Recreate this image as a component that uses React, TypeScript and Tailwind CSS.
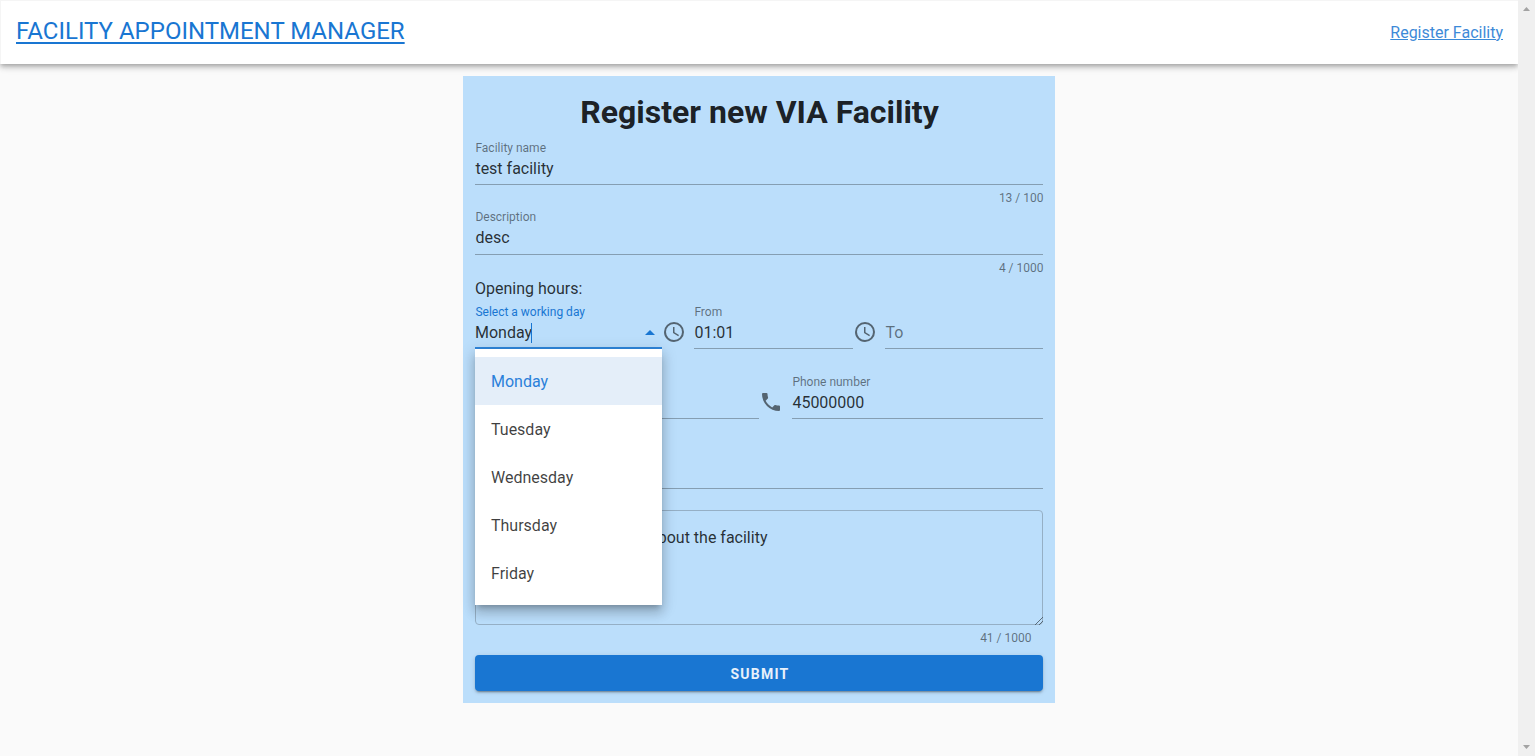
import type { ReactNode } from "react";

const days = ["Monday", "Tuesday", "Wednesday", "Thursday", "Friday"];

function Field({
  label,
  value,
  className = "",
  line = "border-[#859eb2]",
}: {
  label?: string;
  value?: ReactNode;
  className?: string;
  line?: string;
}) {
  return (
    <div className={`flex flex-col border-b ${line} ${className}`}>
      <div className="h-5 pl-[0.4px] text-xs leading-5 text-black/50 whitespace-nowrap">{label}</div>
      <div className="flex h-[21px] items-center justify-between pl-[0.4px] text-base leading-[21px] text-black/80">
        {value}
      </div>
    </div>
  );
}

function Counter({ children, className = "" }: { children: ReactNode; className?: string }) {
  return (
    <div className={`h-5 text-right text-xs leading-5 text-black/50 ${className}`}>
      <span className="-mr-[0.5px]">{children}</span>
    </div>
  );
}

function ClockIcon({ className = "" }: { className?: string }) {
  return (
    <svg viewBox="0 0 24 24" className={`size-6 shrink-0 ${className}`} fill="#546471">
      <path d="M12,20A8,8 0 0,0 20,12A8,8 0 0,0 12,4A8,8 0 0,0 4,12A8,8 0 0,0 12,20M12,2A10,10 0 0,1 22,12A10,10 0 0,1 12,22C6.47,22 2,17.5 2,12A10,10 0 0,1 12,2M12.5,7V12.25L17,14.92L16.25,16.15L11,13V7H12.5Z" />
    </svg>
  );
}

function PhoneIcon({ className = "" }: { className?: string }) {
  return (
    <svg viewBox="0 0 24 24" className={`size-6 shrink-0 ${className}`} fill="#546471">
      <path d="M6.62,10.79C8.06,13.62 10.38,15.94 13.21,17.38L15.41,15.18C15.69,14.9 16.08,14.82 16.43,14.93C17.55,15.3 18.75,15.5 20,15.5A1,1 0 0,1 21,16.5V20A1,1 0 0,1 20,21A17,17 0 0,1 3,4A1,1 0 0,1 4,3H7.5A1,1 0 0,1 8.5,4C8.5,5.25 8.7,6.45 9.07,7.57C9.18,7.92 9.1,8.31 8.82,8.59L6.62,10.79Z" />
    </svg>
  );
}

function DayMenu() {
  return (
    <ul className="absolute left-0 top-[47px] z-10 w-[187px] bg-white py-2 shadow-[0_5px_5px_-3px_rgba(0,0,0,0.2),0_8px_10px_1px_rgba(0,0,0,0.14),0_3px_14px_2px_rgba(0,0,0,0.12)]">
      {days.map((day, i) => (
        <li
          key={day}
          className={`flex h-12 items-center px-4 pt-px text-base ${
            i === 0 ? "bg-[#e4eef9] text-[#2a80da]" : "text-black/75"
          }`}
        >
          {day}
        </li>
      ))}
    </ul>
  );
}

export default function App() {
  return (
    <div className="flex h-[756px] w-full overflow-hidden bg-[#fafafa] font-[Roboto,sans-serif]">
      <div className="flex min-w-0 flex-1 flex-col">
        <header className="flex h-16 shrink-0 items-center justify-between border-l border-t border-[#f5f5f5] bg-white pl-[15px] pr-[15px] shadow-[0_2px_4px_-1px_rgba(0,0,0,0.2),0_4px_5px_0_rgba(0,0,0,0.14),0_1px_10px_0_rgba(0,0,0,0.12)]">
          <a
            href="#"
            className="mb-[3px] text-2xl leading-6 text-[#1976d2] underline decoration-2 underline-offset-[3px] [text-decoration-skip-ink:none]"
          >
            FACILITY APPOINTMENT MANAGER
          </a>
          <a href="#" className="text-base text-[#1976d2] underline opacity-85">
            Register Facility
          </a>
        </header>

        <main className="mx-auto mt-3 flex h-[627px] w-[592px] flex-col bg-[#bbdefb] p-3">
          <h1 className="h-[50px] pl-px text-center text-[32px] font-bold leading-12 text-black/[.87]">
            Register new VIA Facility
          </h1>
          <Field label="Facility name" value="test facility" className="h-[47px]" />
          <Counter className="mt-[3px] -mb-px">13 / 100</Counter>
          <Field label="Description" value="desc" className="h-12" />
          <Counter className="mt-[3px]">4 / 1000</Counter>
          <div className="h-6 pt-px text-base leading-5 text-black/80">Opening hours:</div>

          <div className="flex h-[70px] items-start">
            <div className="relative w-[187px]">
              <div className="flex h-[47px] flex-col border-b-2 border-[#2f86dc]">
                <div className="h-5 pl-[0.4px] text-xs leading-5 text-[#1976d2]">
                  Select a working day
                </div>
                <div className="flex h-[21px] items-center justify-between text-base leading-[21px] text-black/80">
                  <span className="flex items-center">
                    Monday
                    <span className="-ml-px h-5 w-px bg-[#1976d2]" />
                  </span>
                  <svg viewBox="0 0 10 5" className="mb-px mr-[7px] h-[5px] w-[10px]" fill="#1976d2">
                    <path d="M0 5L5 0L10 5Z" />
                  </svg>
                </div>
              </div>
              <DayMenu />
            </div>
            <ClockIcon className="-ml-[0.5px] mt-[18px]" />
            <Field label="From" value="01:01" className="ml-[8.5px] h-[47px] w-[159px]" />
            <ClockIcon className="-ml-[0.5px] mt-[18px]" />
            <Field
              value={<span className="text-black/50">To</span>}
              className="ml-[8.5px] h-[47px] w-[158px]"
            />
          </div>

          <div className="flex h-[70px] items-start">
            <Field className="h-[47px] w-[284px]" />
            <PhoneIcon className="mt-[18px]" />
            <Field
              label="Phone number"
              value="45000000"
              className="ml-[9px] h-[47px] w-[251px]"
            />
          </div>

          <Field className="h-[47px]" />

          <div className="relative mt-[21px] h-[115px] rounded border border-[#95afc5] pl-[173px] pt-[17px] text-base leading-5 text-black/80">
            about the facility
            <svg
              viewBox="0 0 8 8"
              className="absolute -bottom-px -right-px size-2"
              stroke="#44525e"
              strokeWidth="0.8"
            >
              <path d="M0 8L8 0M4 8L8 4" />
            </svg>
          </div>
          <Counter className="mt-[3px] pr-3">41 / 1000</Counter>
          <button className="mt-[7px] h-9 rounded bg-[#1976d2] pl-[2px] pt-px text-sm font-bold tracking-[1.25px] text-white/90 shadow-[0_3px_1px_-2px_rgba(0,0,0,0.2),0_2px_2px_0_rgba(0,0,0,0.14),0_1px_5px_0_rgba(0,0,0,0.12)]">
            SUBMIT
          </button>
        </main>
      </div>

      <div className="flex w-[17px] shrink-0 flex-col items-center justify-between bg-[#f0f0f0] py-[7px]">
        <svg viewBox="0 0 7 4" className="h-1 w-[7px]" fill="#a3a3a3">
          <path d="M0 4L3.5 0L7 4Z" />
        </svg>
        <svg viewBox="0 0 7 4" className="h-1 w-[7px]" fill="#a3a3a3">
          <path d="M0 0L3.5 4L7 0Z" />
        </svg>
      </div>
    </div>
  );
}
